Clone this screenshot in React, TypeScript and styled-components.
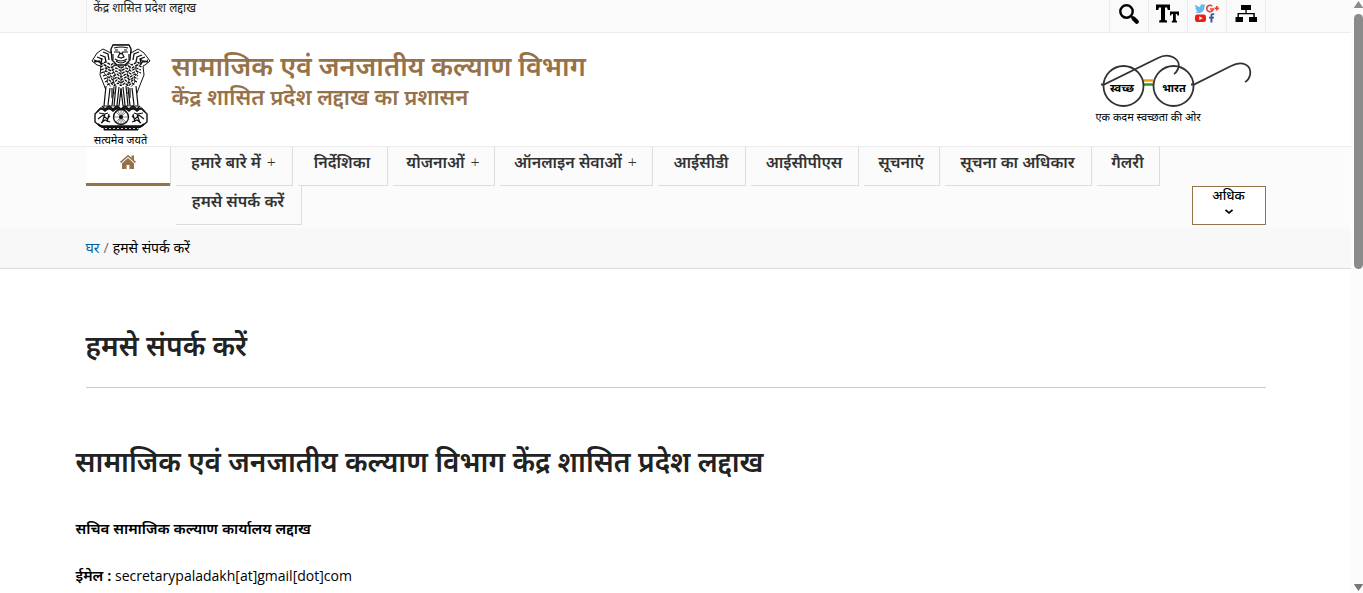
import React from "react";
import styled, { createGlobalStyle } from "styled-components";

const brand = "#96724a";
const line = "#ececec";

const GlobalStyle = createGlobalStyle`
  * { box-sizing: border-box; }
  body {
    margin: 0;
    background: #fff;
    color: #000;
    font-family: "Noto Sans", "Noto Sans Devanagari", "Open Sans", sans-serif;
    font-size: 14px;
    line-height: 20px;
  }
  h1, h2, p, ul, ol { margin: 0; padding: 0; }
  ul, ol { list-style: none; }
  a { color: inherit; text-decoration: none; }
  svg { flex: none; }
`;

const Shell = styled.div`
  display: grid;
  grid-template-columns: minmax(0, 1fr) 12px;
  height: 100vh;
  overflow: hidden;
`;

const Page = styled.div`
  min-width: 0;
  overflow: hidden;
`;

const Container = styled.div`
  display: flex;
  width: 100%;
  max-width: 1180px;
  margin: 0 auto;
`;

const TopBar = styled.div`
  background: #fafafa;
  border-bottom: 1px solid ${line};
`;

const TopInner = styled(Container)`
  justify-content: space-between;
  height: 32px;
  border-left: 1px solid ${line};
`;

const Territory = styled.a`
  padding-left: 7px;
  color: #222;
  font-size: 12px;
  line-height: 16px;
`;

const Tools = styled.ul`
  display: flex;
  border-right: 1px solid ${line};
`;

const ToolButton = styled.button`
  display: flex;
  justify-content: center;
  width: 39px;
  height: 32px;
  padding: 3px 0 0;
  border: 0;
  border-left: 1px solid ${line};
  background: none;
  color: #000;
`;

const Header = styled.header`
  border-bottom: 1px solid ${line};
`;

const HeaderInner = styled(Container)`
  justify-content: space-between;
  height: 113px;
`;

const Brand = styled.a`
  display: flex;
  gap: 16px;
  color: ${brand};
`;

const Emblem = styled.span`
  display: flex;
  flex-direction: column;
  align-items: center;
  width: 70px;
  padding-top: 11px;
  color: #000;
  font-size: 11px;
  line-height: 12px;
  white-space: nowrap;
`;

const BrandText = styled.span`
  display: flex;
  flex-direction: column;
  padding-top: 18px;
  font-weight: 600;
  line-height: 30px;
`;

const Department = styled.span`
  font-size: 27px;
`;

const Administration = styled.span`
  font-size: 22px;
`;

const Swachh = styled.a`
  display: flex;
  flex-direction: column;
  width: 170px;
  padding-top: 20px;
  font-size: 11px;
  line-height: 16px;
`;

const Nav = styled.nav`
  background: #fbfbfb;
`;

const NavInner = styled(Container)`
  align-items: flex-end;
  gap: 5px;
  padding-bottom: 3px;
`;

const HomeLink = styled.a`
  display: flex;
  flex: none;
  align-self: flex-start;
  justify-content: center;
  width: 85px;
  height: 39px;
  padding-top: 7px;
  border-right: 1px solid #ddd;
  background: linear-gradient(${brand}, ${brand}) bottom / 100% 3px no-repeat #fff;
  color: ${brand};
`;

const Menu = styled.ul`
  display: flex;
  flex: 1;
  flex-wrap: wrap;
  column-gap: 5px;
`;

const MenuLink = styled.a<{ $width: number }>`
  display: flex;
  justify-content: center;
  gap: 6px;
  width: ${(p) => p.$width}px;
  height: 39px;
  border-right: 1px solid #ddd;
  border-bottom: 1px solid #ddd;
  color: #333;
  font-size: 16px;
  font-weight: 600;
  line-height: 30px;
  white-space: nowrap;
`;

const Plus = styled.span`
  font-size: 16px;
  font-weight: 300;
`;

const MoreButton = styled.button`
  display: flex;
  flex: none;
  flex-direction: column;
  align-items: center;
  width: 74px;
  height: 39px;
  padding: 0;
  border: 1px solid ${brand};
  background: #fff;
  color: #000;
  font: 500 13px/17px "Noto Sans", "Noto Sans Devanagari", sans-serif;
`;

const Crumbs = styled.nav`
  background: #f8f8f8;
  border-bottom: 1px solid #ddd;
`;

const CrumbList = styled.ol`
  display: flex;
  gap: 4px;
  width: 100%;
  max-width: 1180px;
  margin: 0 auto;
  padding: 10px 0;
`;

const CrumbLink = styled.a`
  color: #0060a8;
`;

const Slash = styled.span`
  color: #777;
`;

const Main = styled.main`
  width: 100%;
  max-width: 1180px;
  margin: 0 auto;
`;

const Title = styled.h1`
  padding: 57px 0 22px;
  border-bottom: 1px solid #ccc;
  color: #222;
  font-size: 28px;
  font-weight: 600;
  line-height: 39px;
`;

const Content = styled.section`
  margin: 0 -10px;
`;

const Subtitle = styled.h2`
  padding: 54px 0 37px;
  color: #222;
  font-size: 28px;
  font-weight: 600;
  line-height: 39px;
`;

const Line = styled.p`
  padding-bottom: 26px;
`;

const Strong = styled.strong`
  font-size: 15px;
  font-weight: 600;
`;

const Email = styled.span`
  font-family: "Open Sans", sans-serif;
`;

const Scrollbar = styled.div`
  display: flex;
  flex-direction: column;
  align-items: flex-end;
  justify-content: space-between;
  padding: 1px 0 2px;
  background: #fcfcfc;
`;

const Thumb = styled.div`
  width: 9px;
  height: 43vh;
  margin: 5px 0 auto;
  border-radius: 5px;
  background: #8b8b8b;
`;

const menu = [
  { label: "हमारे बारे में", more: true, width: 117 },
  { label: "निर्देशिका", width: 90 },
  { label: "योजनाओं", more: true, width: 102 },
  { label: "ऑनलाइन सेवाओं", more: true, width: 153 },
  { label: "आईसीडी", width: 88 },
  { label: "आईसीपीएस", width: 108 },
  { label: "सूचनाएं", width: 76 },
  { label: "सूचना का अधिकार", width: 147 },
  { label: "गैलरी", width: 63 },
  { label: "हमसे संपर्क करें", width: 126 },
];

const SearchIcon = () => (
  <svg width="24" height="24" viewBox="0 0 24 24" fill="none" stroke="currentColor">
    <circle cx="9.500" cy="8.500" r="6.200" strokeWidth="2.400" />
    <path d="M14 13l2 2" strokeWidth="1.800" />
    <path d="M16.500 15.500l3.300 3.300" strokeWidth="4.200" strokeLinecap="round" />
  </svg>
);

const TextSizeIcon = () => (
  <svg width="24" height="24" viewBox="0 0 24 24" fill="currentColor">
    <path d="M0 1.500h14v5.500h-2.200L11 4.500H9V17l2 .6v1.900H3.200v-1.900L5 17V4.500H3L2.200 7H0z" />
    <path d="M14 8.500h9v4h-1.500l-.5-1.500h-1.200v6.500l1.200.5v1.500h-5.200V18l1.200-.5V11h-1.300l-.5 1.500H14z" />
  </svg>
);

const SocialIcon = () => (
  <svg width="24" height="24" viewBox="0 0 24 24">
    <path fill="#65b9ee" d="M10.600 2.200c-.4.2-.8.3-1.200.3.400-.3.700-.7.900-1.200-.5.300-.9.400-1.400.5A2.300 2.300 0 0 0 5.200 4C3.200 3.900 1.700 3 .5 1.600-.1 2.700.2 4 1.200 4.700c-.4 0-.7-.1-1-.3 0 1.100.8 2 1.800 2.300-.3.100-.7.100-1 0 .3.900 1.100 1.500 2.100 1.600A5 5 0 0 1 0 9.200c4.800 2.700 9.700-.4 9.500-5.800.4-.3.800-.7 1.100-1.200z" />
    <path fill="none" stroke="#e94335" strokeWidth="1.700" d="M17.200 3.200a3.200 3.200 0 1 0 .9 2.800h-3.200M19.500 5.300H24M21.800 3v4.600" />
    <rect y="11.500" width="11" height="7.500" rx="2.200" fill="#f11d12" />
    <path fill="#fff" d="M4.300 13.300v3.800l3.300-1.900z" />
    <path fill="#345899" d="M15.500 19.500v-4H14v-1.700h1.500v-1.100c0-1.600.8-2.400 2.200-2.400h1.400v1.700h-.9c-.7 0-.8.3-.8.900v.9h1.700l-.3 1.700h-1.400v4z" />
  </svg>
);

const SitemapIcon = () => (
  <svg width="24" height="24" viewBox="0 0 24 24" fill="currentColor">
    <path d="M7 2h10v5h-4.300v3h8.100v4H23v5h-8v-5h4.300v-2.700H4.900V14H9v5H1.500v-5h2v-4h7.900V7H7z" />
  </svg>
);

const tools = [
  { label: "खोज", Icon: SearchIcon },
  { label: "पाठ का आकार", Icon: TextSizeIcon },
  { label: "सोशल मीडिया", Icon: SocialIcon },
  { label: "साइट मैप", Icon: SitemapIcon },
];

const furRows = [
  "M3 16l5 2 3-3M49 15l4 3 4-2",
  "M9 20l6-2 5 3 4-3M36 18l5 3 5-3 5 2",
  "M9 23l5-2 5 3 6-3 5 3 6-3 5 3 5-3 5 2",
  "M10 26l5-2 5 3 5-3 5 3 5-3 5 3 5-3 5 2",
  "M10 29l5-2 5 3 5-3 5 3 5-3 5 3 5-3 5 2",
  "M12 32l5-2 4 3 5-3 4 3 5-3 4 3 5-3 3 2",
  "M13 35l5-2 4 3 4-3 4 3 5-3 4 3 4-3 4 2",
  "M14 38l4-2 4 3 4-3 4 3 4-3 4 3 4-3 4 2",
  "M16 41l4-2 3 3 4-3 3 3 4-3 3 3 4-3 3 2",
];

const EmblemArt = () => (
  <svg width="60" height="90" viewBox="0 0 60 90" fill="none" stroke="#111" strokeWidth="1">
    <path fill="#fff" d="M20 6 22 1h16l2 5v3l7-4 6 4 6 8-5 4-2 1 1 9-4 10-3 8H16l-3-8-4-10 1-9-4-1-5-4 5-8 6-4 8 4z" />
    {furRows.map((d) => (
      <path key={d} d={d} strokeWidth="1.300" strokeDasharray="3 1" />
    ))}
    <path d="M12 19l4 5-3 5 4 4-1 5 4 5M48 19l-4 5 3 5-4 4 1 5-4 5M24 19l-3 6 3 5-2 6 2 6M36 19l3 6-3 5 2 6-2 6M30 21v21" strokeWidth=".8" />
    <path d="M12 8l5 2 1 6M9 11l5 2 1 5M6 13l5 2-1 4M48 8l-5 2-1 6M51 11l-5 2-1 5M54 13l-5 2 1 4M3 18l5-1 3 4M57 18l-5-1-3 4" strokeWidth="1.300" />
    <path fill="#fff" d="M20 5 22 1h16l2 4-1 11-5 5h-8l-5-5z" strokeWidth="1.300" />
    <path d="M23 4q7-2 14 0M23 8h5l2 2 2-2h5M24 6h3M33 6h3M29 9l-2 4 3 1 3-1-2-4M24 15q6 4 12 0M25 17q5 4 10 0M22 10v6M38 10v6" strokeWidth="1.200" />
    <path fill="#fff" d="M15 42l-2 20h8l2-19M45 42l2 20h-8l-2-19M25 42l-2 20h5l2-17 2 17h5l-2-20" strokeWidth="1.200" />
    <path d="M19 44l-2 17M28 43l-2 18M32 43l2 18M41 44l2 17M21 44v10M39 44v10M30 44v9" strokeWidth="1.200" />
    <path fill="#fff" strokeWidth="1.400" d="M9 65h42l5 5v8l-5 4H9l-5-4v-8z" />
    <path d="M6 68l4-4 4 3 4-3 4 3 4-3 4 2 4-2 4 3 4-3 4 3 4-3 4 4M11 62l3 3 4-3 4 3 4-3 4 3 4-3 4 3 4-3 4 3 3-3" strokeWidth="1.500" />
    <path d="M8 69l6 1 3-1M7 75l5-4 4 4 3-3M10 79l4-3 5 2M52 69l-6 1-3-1M53 75l-5-4-4 4-3-3M50 79l-4-3-5 2M14 70l-3 9M46 70l3 9M18 70l-2 8M42 70l2 8" strokeWidth="1.200" />
    <circle cx="30" cy="73" r="7.500" fill="#fff" strokeWidth="1.400" />
    <circle cx="30" cy="73" r="1.500" fill="#111" />
    <path d="M30 66v14M23 73h14M25 68l10 10M35 68 25 78M27 67l6 12M33 67l-6 12" strokeWidth=".5" />
    <path d="M7 80l4 3h38l4-3" strokeWidth="2" />
    <path fill="#111" d="M13 83h34v3H13z" />
    <path d="M14 84.500h33" stroke="#fff" strokeDasharray="2 2" strokeWidth=".8" />
  </svg>
);

const Spectacles = () => (
  <svg width="160" height="56" viewBox="0 0 160 56" fill="none" stroke="#333" strokeWidth="1.800">
    <path stroke="#f39c12" strokeWidth="2.500" d="M47 27.500h10" />
    <path stroke="#24982f" strokeWidth="2.500" d="M47 31.500h10" />
    <circle cx="27.500" cy="33" r="20" />
    <circle cx="77.500" cy="33" r="20" />
    <path d="M5 31.500h3L62 5c11-6 24 1 20 11-1 2-2 4-4 5M95 31.500h3L135 13c11-6 21-1 19 9-1 4-3 6-5 7" />
    <g fill="#000" stroke="none" fontSize="11" fontWeight="700" textAnchor="middle">
      <text x="26" y="39">स्वच्छ</text>
      <text x="78" y="39">भारत</text>
    </g>
  </svg>
);

export default function App() {
  return (
    <>
      <GlobalStyle />
      <Shell lang="hi">
        <Page>
          <TopBar>
            <TopInner>
              <Territory href="#">केंद्र शासित प्रदेश लद्दाख</Territory>
              <Tools>
                {tools.map(({ label, Icon }) => (
                  <li key={label}>
                    <ToolButton type="button" aria-label={label}>
                      <Icon />
                    </ToolButton>
                  </li>
                ))}
              </Tools>
            </TopInner>
          </TopBar>
          <Header>
            <HeaderInner>
              <Brand href="#">
                <Emblem>
                  <EmblemArt />
                  सत्यमेव जयते
                </Emblem>
                <BrandText>
                  <Department>सामाजिक एवं जनजातीय कल्याण विभाग</Department>
                  <Administration>केंद्र शासित प्रदेश लद्दाख का प्रशासन</Administration>
                </BrandText>
              </Brand>
              <Swachh href="#">
                <Spectacles />
                एक कदम स्वच्छता की ओर
              </Swachh>
            </HeaderInner>
          </Header>
          <Nav>
            <NavInner>
              <HomeLink href="#" aria-label="घर">
                <svg width="18" height="16" viewBox="0 0 18 16" fill="currentColor">
                  <path d="M9 .8 1 7.800l1 1.200 7-6.200L16 9l1-1.200-2-1.800V1.500h-2.500v2.300z" />
                  <path d="M9 4 3 9.200V15h4.600v-4h2.800v4H15V9.200z" />
                </svg>
              </HomeLink>
              <Menu>
                {menu.map(({ label, more, width }) => (
                  <li key={label}>
                    <MenuLink href="#" $width={width}>
                      {label}
                      {more && <Plus>+</Plus>}
                    </MenuLink>
                  </li>
                ))}
              </Menu>
              <MoreButton type="button">
                अधिक
                <svg width="8" height="16" viewBox="0 0 8 16" fill="none" stroke="currentColor" strokeWidth="1.700">
                  <path d="M.5 6l3.500 3 3.500-3" />
                </svg>
              </MoreButton>
            </NavInner>
          </Nav>
          <Crumbs>
            <CrumbList>
              <li><CrumbLink href="#">घर</CrumbLink></li>
              <li><Slash>/</Slash></li>
              <li>हमसे संपर्क करें</li>
            </CrumbList>
          </Crumbs>
          <Main>
            <Title>हमसे संपर्क करें</Title>
            <Content>
              <Subtitle>सामाजिक एवं जनजातीय कल्याण विभाग केंद्र शासित प्रदेश लद्दाख</Subtitle>
              <Line><Strong>सचिव सामाजिक कल्याण कार्यालय लद्दाख</Strong></Line>
              <Line><Strong>ईमेल :</Strong> <Email>secretarypaladakh[at]gmail[dot]com</Email></Line>
            </Content>
          </Main>
        </Page>
        <Scrollbar aria-hidden="true">
          <svg width="9" height="8" viewBox="0 0 9 8" fill="#8b8b8b"><path d="M4.500 0 9 6.500Q9 7 8 7H1Q0 7 0 6.500z" /></svg>
          <Thumb />
          <svg width="9" height="8" viewBox="0 0 9 8" fill="#777"><path d="M4.500 8 9 1.500Q9 1 8 1H1Q0 1 0 1.500z" /></svg>
        </Scrollbar>
      </Shell>
    </>
  );
}
